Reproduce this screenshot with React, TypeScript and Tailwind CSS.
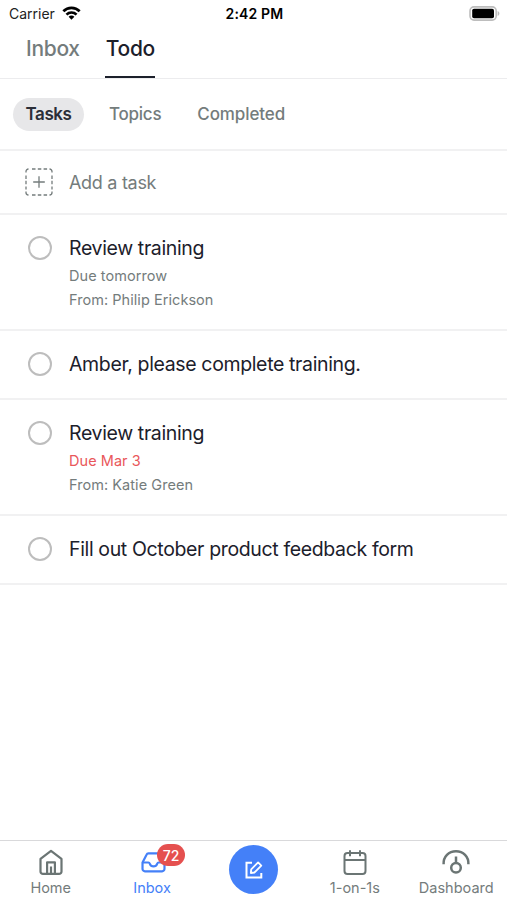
import React from "react";
import clsx from "clsx";

type Task = {
  title: string;
  due?: string;
  overdue?: boolean;
  from?: string;
  rowClass: string;
};

const tasks: Task[] = [
  { title: "Review training", due: "Due tomorrow", from: "Philip Erickson", rowClass: "h-[116px]" },
  { title: "Amber, please complete training.", rowClass: "h-[69px]" },
  { title: "Review training", due: "Due Mar 3", overdue: true, from: "Katie Green", rowClass: "h-[116px]" },
  { title: "Fill out October product feedback form", rowClass: "h-[69px]" },
];

const WifiIcon = () => (
  <svg width="19" height="14" viewBox="0 0 20 14" className="-mt-px ml-[7px]" fill="none" stroke="#000" strokeWidth="2.8">
    <path d="M1.400 5.200a12 12 0 0 1 17.200 0" />
    <path d="M4.700 8.700a7.500 7.500 0 0 1 10.600 0" />
    <path d="M10 14 7 11a4.200 4.200 0 0 1 6 0Z" fill="#000" stroke="none" />
  </svg>
);

const BatteryIcon = () => (
  <svg width="31" height="15" viewBox="0 0 31 15">
    <rect x="1" y="0.9" width="26.2" height="13.2" rx="4" fill="#fff" stroke="#bdbdbd" strokeWidth="1.6" />
    <rect x="3.200" y="2.8" width="21.800" height="9.4" rx="1.8" fill="#000" />
    <path d="M28.600 5v5c1.100-.4 1.800-1.400 1.800-2.500s-.7-2.100-1.800-2.500Z" fill="#bdbdbd" />
  </svg>
);

const AddIcon = () => (
  <svg width="28" height="28" viewBox="0 0 28 28" fill="none" stroke="#747c7c" strokeWidth="1.300">
    <path d="M1 4.500v-1A2.500 2.500 0 0 1 3.500 1M24.500 1A2.500 2.500 0 0 1 27 3.500v1M27 23.500v1a2.500 2.500 0 0 1-2.500 2.500M3.500 27A2.500 2.500 0 0 1 1 24.500v-1" />
    <path d="M7 1h3.500M12.800 1h3.500M18.600 1h3.500M7 27h3.500M12.800 27h3.500M18.600 27h3.500M1 7.500v3.500M1 12.800v3.500M1 18.600v3M27 7.500v3.500M27 12.800v3.500M27 18.600v3" />
    <path d="M14 8.200v11.600M8.200 14h11.600" />
  </svg>
);

const HomeIcon = () => (
  <svg width="26" height="28" viewBox="0 0 26 28" fill="none" stroke="#6b7574" strokeWidth="2.200" strokeLinejoin="round">
    <path d="M2.500 9.800 13 1.800l10.500 8v12.600a2.500 2.500 0 0 1-2.500 2.500H5a2.500 2.500 0 0 1-2.500-2.500Z" />
    <path d="M9.100 24.800v-11.500h7.800v11.500M13 17.500v7.300" />
  </svg>
);

const InboxIcon = () => (
  <svg width="25" height="21" viewBox="0 0 26 22" className="ml-[3px]" fill="none" stroke="#4480f8" strokeWidth="2.300" strokeLinejoin="round">
    <path d="M1.500 11 5.700 2.800a2.200 2.200 0 0 1 2-1.300h10.600a2.200 2.200 0 0 1 2 1.300l4.200 8.200v6.700a2.500 2.500 0 0 1-2.500 2.500H4a2.500 2.500 0 0 1-2.500-2.500Z" />
    <path d="M1.500 11h6.200c.9 0 1.200.6 1.500 1.400.6 1.700 2 2.700 3.800 2.700s3.200-1 3.800-2.700c.3-.8.6-1.400 1.500-1.400h6.200" />
  </svg>
);

const ComposeIcon = () => (
  <svg width="18" height="18" viewBox="0 0 18 18" fill="none" stroke="#fff" strokeWidth="2">
    <path d="M7 1.700H1.500v14.800h14.800V12" />
    <path d="m5.800 12 .4-3.700 6.900-6.900 3.200 3.200-6.900 6.900Z" strokeLinejoin="round" strokeWidth="1.800" />
  </svg>
);

const CalendarIcon = () => (
  <svg width="24" height="26" viewBox="0 0 24 26" fill="none" stroke="#6b7574" strokeWidth="2">
    <rect x="1.500" y="3" width="21" height="21" rx="3" />
    <path d="M1.500 10h21M7 .2v6M17 .2v6" />
  </svg>
);

const GaugeIcon = () => (
  <svg width="28" height="26" viewBox="0 0 28 26" fill="none" stroke="#6b7574" strokeWidth="2.500">
    <path d="M1.600 14.300C1.200 6.500 6.800 1.300 14 1.300s12.800 5.200 12.400 13" />
    <circle cx="14" cy="17.700" r="4.800" />
    <path d="M14 6.500v6.500" />
  </svg>
);

const NavItem = ({ label, active, children }: { label: string; active?: boolean; children: React.ReactNode }) => (
  <button className={clsx("flex h-full w-1/5 flex-col items-center", active ? "text-[#4480f8]" : "text-[#747c7c]")}>
    <span className="relative mt-[7px] flex h-[29px] items-center justify-center">{children}</span>
    <span className="mt-0.5 text-[14.5px] leading-[18px] whitespace-nowrap">{label}</span>
  </button>
);

const TaskRow = ({ task }: { task: Task }) => (
  <li className={clsx("flex border-b-2 border-[#f1f1f2] pl-7", task.rowClass)}>
    <span className="mt-[21px] size-6 shrink-0 rounded-full border-2 border-[#bdbdbd]" />
    <div className="ml-[17px] pt-[19px]">
      <h2 className="text-[19.5px] leading-7 tracking-[-0.36px] text-[#1c202b]">{task.title}</h2>
      {task.due && (
        <p className={clsx("mt-0.5 text-[14.5px] leading-6 tracking-[0.05px]", task.overdue ? "text-[#e9575b]" : "text-[#747c7c]")}>
          {task.due}
        </p>
      )}
      {task.from && <p className="text-[14.5px] leading-6 tracking-[0.05px] text-[#747c7c]">From: {task.from}</p>}
    </div>
  </li>
);

export default function App() {
  return (
    <div className="flex h-[900px] w-[507px] flex-col overflow-hidden bg-white font-['Inter',sans-serif]">
      {/* Status bar */}
      <div className="grid h-[27px] shrink-0 grid-cols-3 items-center pr-[7px] pl-[9px]">
        <div className="flex items-center text-[14px] text-[#222]">
          Carrier
          <WifiIcon />
        </div>
        <div className="text-center text-[14px] font-semibold tracking-[0.15px] text-black">2:42 PM</div>
        <div className="flex justify-end">
          <BatteryIcon />
        </div>
      </div>

      {/* Top tabs */}
      <div className="flex h-[52px] shrink-0 items-end gap-[25px] border-b border-[#ececee] pl-[26px] text-[21px] font-medium tracking-[-0.3px]">
        <button className="h-[51px] pb-[7px] text-[#747c7c]">Inbox</button>
        <button className="h-[51px] border-b-2 border-[#1c202b] pb-[5px] pl-px text-[#1c202b]">Todo</button>
      </div>

      {/* Filters */}
      <div className="flex h-[72px] shrink-0 items-center border-b-2 border-[#f1f1f2] pl-[13px] text-[17px] font-medium text-[#747c7c]">
        <button className="h-[33px] w-[71px] rounded-full bg-[#e7e7e9] pt-px font-semibold tracking-[-0.4px] text-[#2b2e38]">Tasks</button>
        <button className="ml-[25px] pt-px tracking-[-0.25px]">Topics</button>
        <button className="ml-9 pt-px tracking-[-0.1px]">Completed</button>
      </div>

      <div className="flex h-16 shrink-0 items-center border-b-2 border-[#f1f1f2] pl-[25px] text-[#747c7c]">
        <AddIcon />
        <span className="ml-4 text-[18px] tracking-[-0.3px]">Add a task</span>
      </div>

      <ul className="flex-1">
        {tasks.map((task, i) => (
          <TaskRow key={i} task={task} />
        ))}
      </ul>

      <nav className="flex h-[60px] shrink-0 border-t border-[#d9d9db]">
        <NavItem label="Home">
          <HomeIcon />
        </NavItem>
        <NavItem label="Inbox" active>
          <InboxIcon />
          <span className="absolute -top-1 left-[19px] flex h-[22px] w-7 items-center justify-center rounded-full bg-[#e5504f] text-[14px] font-medium text-white">
            72
          </span>
        </NavItem>
        <div className="flex w-1/5 justify-center pt-1 pl-px">
          <button className="flex size-[49px] items-center justify-center rounded-full bg-[#4480f8]">
            <ComposeIcon />
          </button>
        </div>
        <NavItem label="1-on-1s">
          <CalendarIcon />
        </NavItem>
        <NavItem label="Dashboard">
          <GaugeIcon />
        </NavItem>
      </nav>
    </div>
  );
}
